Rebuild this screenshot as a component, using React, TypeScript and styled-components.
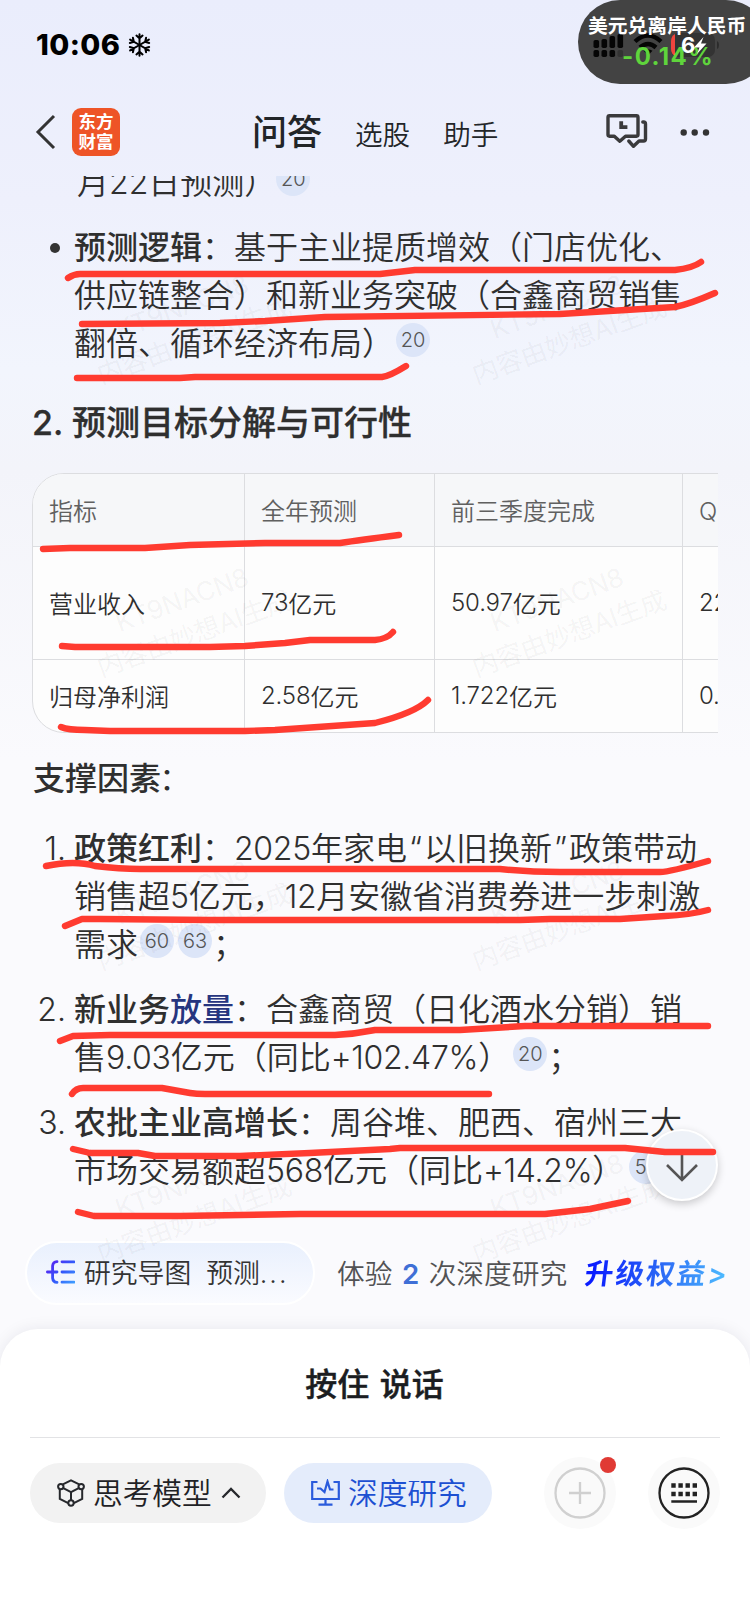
import React from "react";
import styled, { createGlobalStyle, css } from "styled-components";

const Global = createGlobalStyle`
  html, body { margin: 0; padding: 0; background: #fff; }
  * { box-sizing: border-box; }
`;

const fontStack = `Inter, "Noto Sans CJK SC", sans-serif`;

const Screen = styled.main`
  position: relative;
  width: 750px;
  height: 1624px;
  overflow: hidden;
  display: flex;
  flex-direction: column;
  font-family: ${fontStack};
  font-weight: 350;
  color: #2f2f2f;
  background: linear-gradient(180deg, #eaedfc 0, #eef0fc 200px, #f2f5fd 370px, #f3f4fa 470px, #fafafd 760px, #fafafd 1535px, #fff 1535px);
`;

const StatusBar = styled.header`
  height: 88px;
  padding: 1px 0 0 36px;
  display: flex;
  align-items: center;
  gap: 8px;
  color: #000;
  svg { margin-top: 1px; }
`;

const Clock = styled.span`
  font-size: 29px;
  font-weight: 800;
  letter-spacing: 0.4px;
`;

const RatePill = styled.aside`
  position: absolute;
  top: 0;
  left: 578px;
  width: 190px;
  height: 84px;
  border-radius: 42px;
  background: #434343;
  padding: 11px 0 0 10px;
  white-space: nowrap;
  svg { position: absolute; left: 0; top: 0; }
`;

const RateName = styled.div`
  position: relative;
  font-size: 19.8px;
  line-height: 30px;
  font-weight: 700;
  color: #fff;
`;

const RateValue = styled.div`
  position: relative;
  margin-left: 34px;
  font-size: 24px;
  line-height: 32px;
  font-weight: 700;
  letter-spacing: 1.4px;
  color: #5fd43c;
`;

const BatteryLevel = styled.span`
  position: absolute;
  left: 103px;
  top: 31px;
  font-size: 22px;
  line-height: 28px;
  font-weight: 700;
  color: #fff;
`;

const NavBar = styled.nav`
  height: 88px;
  display: flex;
  align-items: center;
  padding: 0 40px 0 34px;
`;

const Logo = styled.div`
  width: 48px;
  height: 48px;
  margin-left: 14px;
  padding-top: 4px;
  border-radius: 9px;
  background: #ee5427;
  color: #fff;
  text-align: center;
  font-size: 17.5px;
  line-height: 20px;
  font-weight: 700;
`;

const Tabs = styled.div`
  display: flex;
  align-items: center;
  margin-left: 132px;
  gap: 33px;
`;

const Tab = styled.span<{ $active?: boolean }>`
  font-size: ${(p) => (p.$active ? 35 : 27.6)}px;
  line-height: 44px;
  font-weight: ${(p) => (p.$active ? 500 : 350)};
  margin-top: ${(p) => (p.$active ? 0 : 6)}px;
  color: #222528;
`;

const NavIcons = styled.div`
  margin-left: auto;
  display: flex;
  align-items: center;
`;

const Answer = styled.article`
  height: 1060px;
  overflow: hidden;
  padding: 0 32px;
`;

const Line = styled.div<{ $indent?: number }>`
  height: 48px;
  line-height: 48px;
  font-size: 32px;
  padding-left: ${(p) => p.$indent ?? 0}px;
  white-space: nowrap;
`;

const Item = styled.section<{ $first?: boolean }>`
  display: flex;
  margin-top: ${(p) => (p.$first ? -17 : 17)}px;
`;

const Marker = styled.div`
  width: 42px;
  padding-right: 8px;
  flex: none;
  text-align: right;
  font-size: 32px;
  line-height: 48px;
  white-space: nowrap;
`;

const Bullet = styled.div`
  width: 10px;
  height: 10px;
  border-radius: 50%;
  background: #333;
  margin: 19px 14px 0 18px;
  flex: none;
`;

const Strong = styled.b`
  font-weight: 500;
`;

const Term = styled(Strong)`
  color: #26357f;
`;

const Num = styled.span<{ $ls?: number }>`
  letter-spacing: ${(p) => p.$ls ?? -0.3}px;
`;

const Quote = styled.span`
  margin: 0 2px;
`;

const Cite = styled.span<{ $left?: number; $right?: number }>`
  display: inline-flex;
  width: 34px;
  height: 34px;
  border-radius: 50%;
  align-items: center;
  justify-content: center;
  vertical-align: 8px;
  margin: -1px ${(p) => p.$right ?? 0}px 0 ${(p) => p.$left ?? 0}px;
  background: #dce5f8;
  color: #555;
  font-size: 20px;
  line-height: 34px;
`;

const Semi = styled.span`
  margin-left: 1px;
`;

const Heading = styled.h2`
  margin: 30px 0 25px 0;
  font-size: 34px;
  line-height: 50px;
  font-weight: 500;
  -webkit-text-stroke: 0.3px #2f2f2f;
  white-space: nowrap;
`;

const TableScroll = styled.div`
  overflow: hidden;
  height: 260px;
`;

const Table = styled.div`
  width: 900px;
  border: 1px solid #dcdde0;
  border-radius: 32px;
  background: #fdfdfd;
  overflow: hidden;
`;

const Row = styled.div<{ $h: number; $head?: boolean }>`
  display: grid;
  grid-template-columns: 211px 190px 248px 1fr;
  height: ${(p) => p.$h}px;
  ${(p) =>
    p.$head
      ? css`
          background: #f6f7f9;
          color: #606060;
        `
      : css`
          border-top: 1px solid #dcdde0;
        `}
`;

const Cell = styled.div`
  display: flex;
  align-items: center;
  padding: 0 16px 2px;
  font-size: 24px;
  white-space: nowrap;
  & + & { border-left: 1px solid #dcdde0; }
`;

const SubHeading = styled.h3`
  margin: 22px 0 22px 1px;
  font-size: 32px;
  line-height: 48px;
  font-weight: 500;
  span { font-weight: 350; margin-left: -2px; }
`;

const Actions = styled.div`
  height: 93px;
  display: flex;
  align-items: flex-start;
  padding: 5px 0 0 25px;
  white-space: nowrap;
`;

const MapChip = styled.button`
  width: 290px;
  height: 64px;
  padding: 0 0 2px 19px;
  display: flex;
  align-items: center;
  border: 2px solid #fff;
  border-radius: 32px;
  background: linear-gradient(180deg, #e9f0fd, #fafbff);
  color: #333;
  font: 350 26.8px ${fontStack};
  text-align: left;
  white-space: nowrap;
  svg { margin-right: 9px; }
  span { margin-bottom: 2px; }
  span + span { margin-left: 15px; }
  i { font-style: normal; letter-spacing: 2px; }
`;

const Quota = styled.div`
  margin-left: 22px;
  font-size: 27.7px;
  line-height: 66px;
  color: #525254;
  b { color: #3f6fd6; font-weight: 600; margin: 0 9.5px; }
`;

const Upgrade = styled.a`
  margin-left: 18px;
  padding-right: 4px;
  font-size: 28.5px;
  line-height: 66px;
  font-weight: 600;
  letter-spacing: 2.2px;
  transform: skewX(-7deg);
  color: transparent;
  background: linear-gradient(90deg, #0a1cff 5%, #2a66f5 50%, #4fc0ff 98%);
  background-clip: text;
  -webkit-background-clip: text;
`;

const Panel = styled.footer`
  height: 206px;
  border-radius: 38px 38px 0 0;
  background: #fff;
  box-shadow: 0 0 16px rgba(30, 30, 50, 0.08);
  clip-path: inset(-20px 0 0 0);
  padding: 0 30px;
  display: flex;
  flex-direction: column;
`;

const Talk = styled.div`
  height: 109px;
  padding: 2px 1px 0 0;
  border-bottom: 1px solid #e2e3e5;
  text-align: center;
  font-size: 32px;
  line-height: 108px;
  font-weight: 500;
  -webkit-text-stroke: 0.4px #1b1d21;
  color: #1b1d21;
  word-spacing: 2px;
`;

const Tools = styled.div`
  display: flex;
  align-items: center;
  padding-top: 19px;
`;

const Pill = styled.button<{ $primary?: boolean }>`
  height: 60px;
  width: ${(p) => (p.$primary ? 208 : 236)}px;
  margin-right: 18px;
  padding: 0 0 0 27px;
  border: 0;
  border-radius: 30px;
  display: flex;
  align-items: center;
  font: 350 29.7px ${fontStack};
  white-space: nowrap;
  background: ${(p) => (p.$primary ? "#e4ecfb" : "#f2f2f2")};
  color: ${(p) => (p.$primary ? "#1d50d2" : "#1f2226")};
  span { margin: 0 9px 3px 8px; }
`;

const RoundButton = styled.div<{ $left: number }>`
  position: relative;
  width: 72px;
  height: 72px;
  margin-left: ${(p) => p.$left}px;
  border-radius: 50%;
  background: #fafafa;
  svg { display: block; }
`;

const Dot = styled.i`
  position: absolute;
  right: 0;
  top: 0;
  width: 16px;
  height: 16px;
  border-radius: 50%;
  background: #e03a34;
`;

const DownButton = styled.div`
  position: absolute;
  left: 646px;
  top: 1129px;
  width: 72px;
  height: 72px;
  border: 2px solid #fff;
  border-radius: 50%;
  background: #eef2f8;
  box-shadow: 0 3px 8px rgba(0, 0, 0, 0.2);
  svg { display: block; }
`;

const Overlay = styled.svg`
  position: absolute;
  left: 0;
  top: 0;
  pointer-events: none;
`;

const Mark = styled.div<{ $x: number; $y: number }>`
  position: absolute;
  left: ${(p) => p.$x}px;
  top: ${(p) => p.$y}px;
  width: 220px;
  transform: rotate(-20deg);
  text-align: center;
  font-size: 26px;
  line-height: 36px;
  letter-spacing: -0.3px;
  font-weight: 400;
  color: rgba(0, 0, 0, 0.05);
  white-space: nowrap;
`;

const MarkLayer = styled.div`
  position: absolute;
  left: 0;
  top: 176px;
  width: 750px;
  height: 1090px;
  overflow: hidden;
  pointer-events: none;
`;

const strokes = [
  "M68 278Q74 274 80 274H380L415 270H675Q693 268 701 262",
  "M82 324L220 323L265 321L325 317L560 314L675 307Q690 304 715 293",
  "M77 378H180L195 377H382Q390 376 406 366",
  "M43 549L70 548H145L190 545L265 543H340Q360 540 399 535",
  "M62 646L75 647H210L245 646L285 643L310 640H375Q387 639 393 632",
  "M61 727Q68 730 85 730L110 731H245L275 730L375 723Q415 713 428 700",
  "M46 866Q75 860 95 866Q120 869 140 869H500Q530 872 560 872H660Q670 872 708 861",
  "M65 926L82 919H100L210 920H520L550 919H620L665 916Q690 915 708 910",
  "M60 1041L73 1036L110 1035H335Q355 1034 375 1030H460L525 1026H708",
  "M72 1094Q76 1088 83 1088H162L190 1093Q196 1094 205 1094H489",
  "M73 1149L90 1153H138L155 1156H240L310 1153L390 1149L400 1148H625L665 1152H713",
  "M78 1212L94 1216H180L300 1214H545L590 1209L628 1201",
];

const rows = [
  ["指标", "全年预测", "前三季度完成", "Q4预测"],
  ["营业收入", "73亿元", "50.97亿元", "22.03亿元"],
  ["归母净利润", "2.58亿元", "1.722亿元", "0.858亿元"],
];
const rowHeights = [72, 113, 73];

const CellText = ({ text }: { text: string }) => {
  const match = text.match(/^([\d.]+)(.*)$/);
  if (!match) return <>{text}</>;
  return (
    <>
      <Num $ls={-0.15}>{match[1]}</Num>
      {match[2]}
    </>
  );
};

const Snow = () => (
  <svg width="23" height="26" viewBox="-12 -13 24 26" fill="none" stroke="#000" strokeWidth="2.1" strokeLinecap="round">
    {[0, 60, 120, 180, 240, 300].map((a) => (
      <path key={a} transform={`rotate(${a})`} d="M0 0V-11.3M-3.2 -9.8L0 -6.8L3.2 -9.8" />
    ))}
  </svg>
);

const StatusIcons = () => (
  <svg width="172" height="84" viewBox="578 0 172 84">
    {[0, 1, 2, 3].map((i) => (
      <g key={i}>
        <rect x={593.5 + i * 8} y={[40, 39, 36, 34][i]} width="5.6" height={[8, 9, 12, 14][i]} rx="1.8" fill="#050505" />
        <rect x={593.5 + i * 8} y="50" width="5.6" height="7" rx="1.8" fill={i === 3 ? "#333" : "#050505"} />
      </g>
    ))}
    <g fill="none" stroke="#050505" strokeWidth="4.4">
      <path d="M635 41.5Q648 29.5 661 41.5" />
      <path d="M640 47.5Q648 40.5 656 47.5" />
    </g>
    <path d="M643.5 50.8Q648 47.5 652.5 50.8L648 55.5Z" fill="#050505" />
    <rect x="671" y="33" width="44" height="24" rx="7" fill="#333" />
    <path d="M675 34V56Q671 54 671 49V41Q671 36 675 34Z" fill="#f0443e" />
    <path d="M717 41Q719 42 719 45T717 49Z" fill="#2b2b2b" />
  </svg>
);

export default function App() {
  return (
    <Screen>
      <Global />
      <StatusBar>
        <Clock>10:06</Clock>
        <Snow />
      </StatusBar>
      <NavBar>
        <svg width="24" height="40" viewBox="34 112 24 40" fill="none" stroke="#333" strokeWidth="3">
          <path d="M54 116L38 132L54 148" />
        </svg>
        <Logo>东方<br />财富</Logo>
        <Tabs>
          <Tab $active>问答</Tab>
          <Tab>选股</Tab>
          <Tab>助手</Tab>
        </Tabs>
        <NavIcons>
          <svg width="106" height="40" viewBox="604 112 106 40" fill="none" stroke="#3a3a3c" strokeWidth="3.4" strokeLinejoin="round" strokeLinecap="round">
            <path d="M609.5 115.8H636.5Q638 115.8 638 117.5V134.6Q638 136.2 636.5 136.2H625.5L619.8 141.2L614.3 136.2H609.5Q608 136.2 608 134.6V117.5Q608 115.8 609.5 115.8Z" />
            <path d="M621.2 123.2V127.2H625.5" strokeWidth="3.8" strokeLinecap="square" strokeLinejoin="miter" />
            <path d="M642.8 122H643.5Q645.5 122 645.5 124V139Q645.5 141 643.5 141H639L633.5 146.3L628.8 141" />
            <g fill="#333" stroke="none">
              <circle cx="683.7" cy="132.5" r="3.2" />
              <circle cx="694.7" cy="132.5" r="3.2" />
              <circle cx="706" cy="132.5" r="3.2" />
            </g>
          </svg>
        </NavIcons>
      </NavBar>

      <Answer>
        <Item $first>
          <Marker />
          <Line $indent={3}>月<Num $ls={0}>22</Num>日预测）<Cite>20</Cite></Line>
        </Item>
        <Item>
          <Bullet />
          <div>
            <Line><Strong>预测逻辑</Strong>：基于主业提质增效（门店优化、</Line>
            <Line>供应链整合）和新业务突破（合鑫商贸销售</Line>
            <Line>翻倍、循环经济布局）<Cite $left={2}>20</Cite></Line>
          </div>
        </Item>
        <Heading>2. 预测目标分解与可行性</Heading>
        <TableScroll>
          <Table>
            {rows.map((r, i) => (
              <Row key={i} $h={rowHeights[i]} $head={i === 0}>
                {r.map((c) => (
                  <Cell key={c}><CellText text={c} /></Cell>
                ))}
              </Row>
            ))}
          </Table>
        </TableScroll>
        <SubHeading>支撑因素<span>：</span></SubHeading>
        <Item>
          <Marker>1.</Marker>
          <div>
            <Line><Strong>政策红利</Strong>：<Num>2025</Num>年家电<Quote>“</Quote>以旧换新<Quote>”</Quote>政策带动</Line>
            <Line>销售超<Num>5</Num>亿元，<Num>12</Num>月安徽省消费券进一步刺激</Line>
            <Line>需求<Cite $left={2} $right={4}>60</Cite><Cite>63</Cite><Semi>；</Semi></Line>
          </div>
        </Item>
        <Item>
          <Marker>2.</Marker>
          <div>
            <Line><Strong>新业务</Strong><Term>放量</Term>：合鑫商贸（日化酒水分销）销</Line>
            <Line>售<Num>9.03</Num>亿元（同比<Num>+102.47%</Num>）<Cite $left={3}>20</Cite><Semi>；</Semi></Line>
          </div>
        </Item>
        <Item>
          <Marker>3.</Marker>
          <div>
            <Line><Strong>农批主业高增长</Strong>：周谷堆、肥西、宿州三大</Line>
            <Line>市场交易额超<Num>568</Num>亿元（同比<Num>+14.2%</Num>）<Cite $left={5}>57</Cite></Line>
          </div>
        </Item>
      </Answer>

      <Actions>
        <MapChip>
          <svg width="29" height="24" viewBox="0 0 29 24" fill="none" strokeWidth="2.8" strokeLinecap="round">
            <defs>
              <linearGradient id="map" gradientUnits="userSpaceOnUse" x1="4" y1="0" x2="28" y2="24">
                <stop offset="0" stopColor="#5b1ff0" />
                <stop offset="0.5" stopColor="#3455fa" />
                <stop offset="1" stopColor="#3fa0ff" />
              </linearGradient>
            </defs>
            <g stroke="url(#map)">
              <path d="M11 1.6Q7 1.8 6.6 6V18Q7 22.2 11 22.4" />
              <path d="M1.4 12.02L11 12M16 1.8L28 1.82M16 12L28 12.02M16 22.2L28 22.22" />
            </g>
          </svg>
          <span>研究导图</span>
          <span>预测<i>...</i></span>
        </MapChip>
        <Quota>体验<b>2</b>次深度研究</Quota>
        <Upgrade>升级权益&gt;</Upgrade>
      </Actions>

      <Panel>
        <Talk>按住 说话</Talk>
        <Tools>
          <Pill>
            <svg width="28" height="28" viewBox="0 0 28 28" fill="none" stroke="#26282c" strokeWidth="2">
              <circle cx="3.8" cy="7.6" r="2.7" />
              <circle cx="24.2" cy="7.6" r="2.7" />
              <circle cx="14" cy="24" r="2.7" />
              <path d="M5.8 5.4L14 1.4L22.2 5.4M6.3 9.2L14 13.2L21.7 9.2M14 13.2V21M2.8 10.2V20L11.2 24.2M25.2 10.2V20L16.8 24.2" />
            </svg>
            <span>思考模型</span>
            <svg width="20" height="12" viewBox="0 0 20 12" fill="none" stroke="#26282c" strokeWidth="2.3">
              <path d="M1.5 10.5L10 2L18.5 10.5" />
            </svg>
          </Pill>
          <Pill $primary>
            <svg width="29" height="28" viewBox="0 0 29 28" fill="none" stroke="#2a5bdc" strokeWidth="2.2">
              <path d="M6.5 3H1.2V20H27.8V3H22.5M14.5 20V25.5M7.5 25.7H21.5M6 9.5H9.5L13.5 13L16.5 2.5L19 10.5H22.5" />
            </svg>
            <span>深度研究</span>
          </Pill>
          <RoundButton $left={34}>
            <svg width="72" height="72" fill="none" stroke="#d0d0d0" strokeWidth="2.3">
              <circle cx="36" cy="36" r="24.5" />
              <path d="M25 36H47M36 25V47" />
            </svg>
            <Dot />
          </RoundButton>
          <RoundButton $left={32}>
            <svg width="72" height="72" fill="none" stroke="#222" strokeWidth="2.3">
              <circle cx="36" cy="36" r="24.5" />
              <path d="M23.3 28.5H49.3M23.3 37H49.3" strokeWidth="4.4" strokeDasharray="4.4 2.7" />
              <path d="M23.3 44.5H49" strokeWidth="2.5" />
            </svg>
          </RoundButton>
        </Tools>
      </Panel>

      <MarkLayer>
        {[0, 1, 2, 3].map((r) =>
          [78, 453].map((x) => (
            <Mark key={`${r}-${x}`} $x={x} $y={112 + r * 293}>
              KT9NACN8<br />内容由妙想AI生成
            </Mark>
          ))
        )}
      </MarkLayer>

      <DownButton>
        <svg width="68" height="68" viewBox="0 0 68 68" fill="none" stroke="#555" strokeWidth="2.6">
          <path d="M34 23V49M19 34L34 49L49 34" />
        </svg>
      </DownButton>

      <Overlay width="750" height="1300" fill="none" stroke="#ff3b30" strokeWidth="6.4" strokeLinecap="round" strokeLinejoin="round">
        {strokes.map((d) => (
          <path key={d} d={d} />
        ))}
      </Overlay>

      <RatePill>
        <StatusIcons />
        <RateName>美元兑离岸人民币</RateName>
        <RateValue>-0.14%</RateValue>
        <BatteryLevel>6</BatteryLevel>
        <svg width="172" height="84" viewBox="578 0 172 84">
          <path d="M703.5 37L694 47.5H699.5L697 54L706.5 43.5H701Z" fill="#fff" />
        </svg>
      </RatePill>
    </Screen>
  );
}
